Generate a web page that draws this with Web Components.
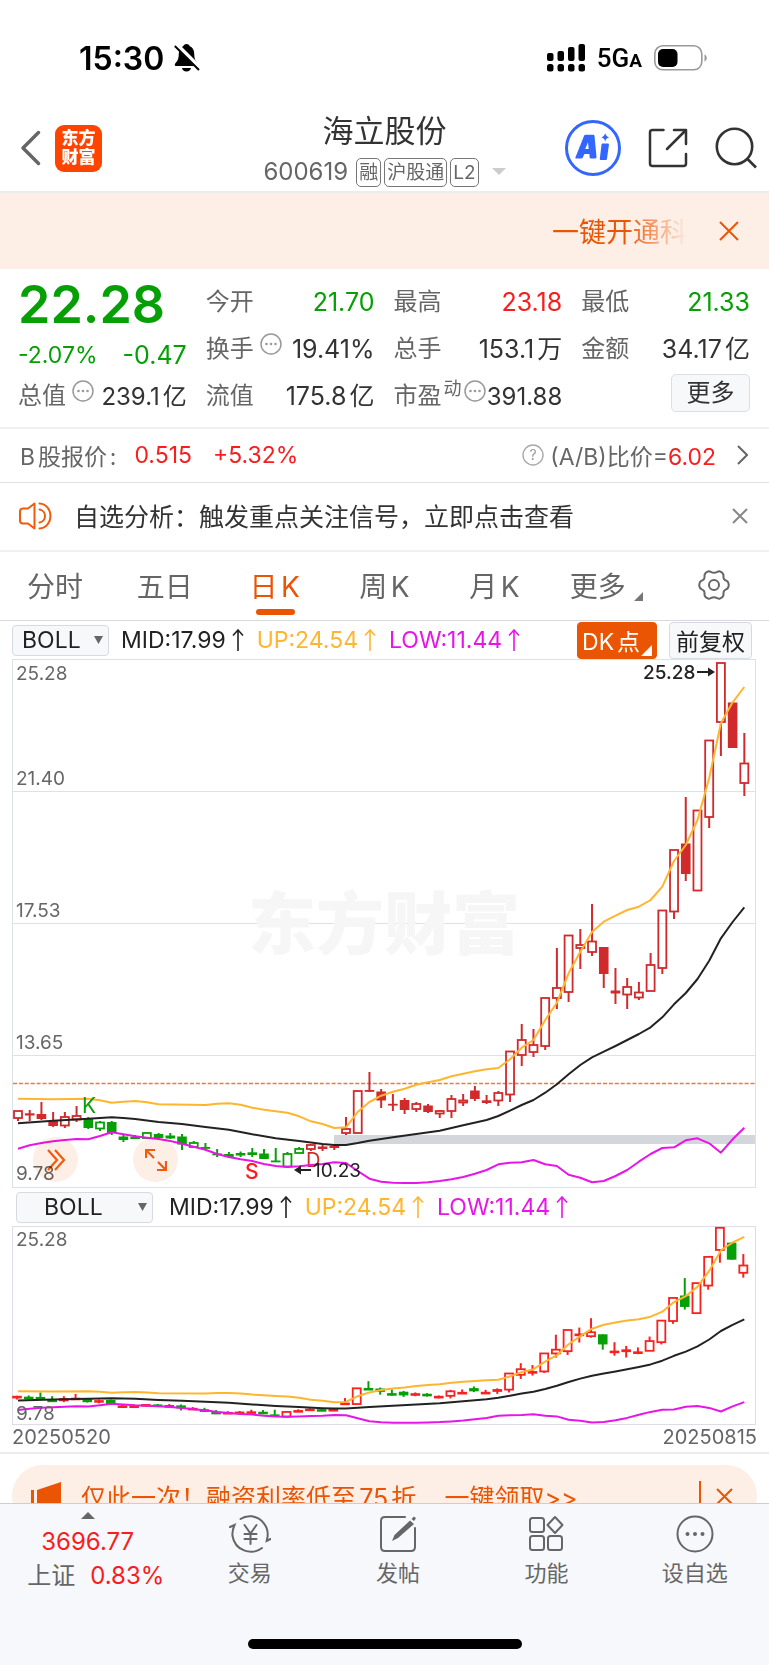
<!DOCTYPE html>
<html lang="zh-CN">
<head>
<meta charset="utf-8">
<meta name="viewport" content="width=device-width">
<title>海立股份 600619</title>
<style>
html{background:#fff}
body{margin:0;font-family:Inter,"Noto Sans CJK SC",sans-serif;color:#333;text-autospace:normal}
</style>
</head>
<body>
<stock-app></stock-app>
<script>
const RESET = `*{box-sizing:border-box}button,select{font:inherit;color:inherit;margin:0;padding:0;border:0;background:none;cursor:pointer;text-autospace:inherit}a{color:inherit;text-decoration:none}svg{display:block;flex:none}`;
const define = (name, css, html) => customElements.define(name, class extends HTMLElement {
  connectedCallback() {
    if (this.shadowRoot) return;
    const root = this.attachShadow({ mode: "open" });
    root.innerHTML = `<style>${RESET}${css}</style>${typeof html === "function" ? html(this) : html}`;
  }
});

define("status-bar", `
:host{display:flex;align-items:center;justify-content:space-between;height:100px;padding:16px 61px 0 79px;color:#000}
.l,.r{display:flex;align-items:center}
.l{font-size:32px;font-weight:600;gap:10px}
.r{gap:12px}
.net{font:500 26px Roboto,sans-serif}
.net small{font-size:19px;font-weight:700}`,
`<div class="l"><span>15:30</span><svg width="26" height="28" viewBox="0 0 26 28"><path d="M12.500 0c-1.800 0-3 1-3.300 2.300C6.500 3.300 4.800 6 4.800 9.500c0 4.500-.8 7-3 9.300-1.300 1.300-1.600 3.200.2 3.200h21c1.800 0 1.500-1.900.2-3.200-2.200-2.300-3-4.800-3-9.300 0-3.500-1.700-6.200-4.400-7.200C15.500 1 14.300 0 12.500 0ZM8 24h9c-.4 2-2 3.600-4.500 3.600S8.400 26 8 24Z"/><path d="M2 .5 26 24.500" stroke="#fff" stroke-width="5"/><path d="M.8 2 25 26" stroke="#000" stroke-width="2"/></svg></div>
<div class="r"><svg width="38" height="28" viewBox="0 0 38 28"><rect y="9" width="6.500" height="8" rx="2"/><rect x="10.500" y="7" width="6.500" height="10" rx="2"/><rect x="21" y="3" width="6.500" height="14" rx="2"/><rect x="31.500" y="0" width="6.500" height="17" rx="2"/><rect y="20" width="6.500" height="7.500" rx="2.500"/><rect x="10.500" y="20" width="6.500" height="7.500" rx="2.500"/><rect x="21" y="20" width="6.500" height="7.500" rx="2.500"/><rect x="31.500" y="20" width="6.500" height="7.500" rx="2.500"/></svg>
<span class="net">5G<small>A</small></span>
<svg width="54" height="26" viewBox="0 0 54 26"><rect x=".8" y=".8" width="47" height="24" rx="8" fill="none" stroke="#999" stroke-width="1.600"/><rect x="4" y="4" width="19.500" height="18" rx="5"/><path d="M50.500 9.500c1.500.6 2.300 2 2.300 3.500s-.8 2.900-2.300 3.500Z" fill="#999"/></svg></div>`);

define("app-header", `
:host{display:grid;grid-template-columns:1fr auto 1fr;align-items:center;height:93px;padding:2px 12px 0 12px;border-bottom:2px solid #ececec}
.l,.r{display:flex;align-items:center}
.l{gap:13px;padding-left:7px}.r{justify-content:flex-end;gap:27px;padding-top:3px}
.logo{width:47px;height:47px;border-radius:9px;background:#ff4400;color:#fff;font-size:17px;font-weight:900;line-height:19px;display:grid;place-content:center;margin-top:3px;padding-bottom:1px}
.back{margin-top:3px}
.mid{text-align:center;padding-top:9px}
h1{margin:0;font-size:31px;line-height:38px;font-weight:400;color:#333}
.sub{display:flex;align-items:center;gap:3px;color:#666;font-size:24px;line-height:36px;padding-top:4px}
.sub b{font-weight:400;margin-right:5px}
.sub i{font-style:normal;font-size:19px;line-height:27px;border:1px solid #777;border-radius:5px;padding:0 2px}
.sub svg{margin-left:10px}`,
`<div class="l"><button class="back" aria-label="返回"><svg width="23" height="36" viewBox="0 0 23 36" fill="none" stroke="#666" stroke-width="3.500" stroke-linecap="round" stroke-linejoin="round"><path d="M19.500 2.500 4 18l15.500 15.500"/></svg></button><a href="#" class="logo"><span>东方</span><span>财富</span></a></div>
<div class="mid"><h1>海立股份</h1><div class="sub"><b>600619</b><i>融</i><i>沪股通</i><i>L2</i><svg width="14" height="8"><path d="M0 0h14L7 7Z" fill="#ccc"/></svg></div></div>
<div class="r"><button aria-label="AI"><svg width="56" height="56" viewBox="0 0 56 56" fill="#36f"><circle cx="28" cy="28" r="26.500" fill="#fff" stroke="#36f" stroke-width="3"/><path fill-rule="evenodd" d="M20.500 14.800h7.500c.8 0 1.400.5 1.500 1.300l2 21c.1.800-.4 1.400-1.200 1.400h-4.500c-.7 0-1.100-.5-1.200-1.200l-.2-3.300h-5l-1.600 3.500c-.3.700-.8 1-1.500 1h-5c-.8 0-1.100-.6-.8-1.300l8.600-21.400c.3-.7.7-1 1.400-1Zm2.500 7.500-2.800 6.700h3.500Z"/><path d="M37.800 23.500h5c.8 0 1.200.5 1.100 1.300l-1.900 14c-.1.800-.6 1.300-1.400 1.300h-4.700c-.8 0-1.200-.5-1.100-1.300l1.700-14c.1-.8.6-1.300 1.300-1.300ZM40.200 13c.8 2.700 1.500 3.500 4 4.300-2.500.8-3.200 1.600-4 4.200-.8-2.600-1.500-3.400-4-4.200 2.500-.8 3.200-1.600 4-4.300Z"/></svg></button>
<button aria-label="分享"><svg width="40" height="40" viewBox="0 0 40 40" fill="none" stroke="#333" stroke-width="2.500" stroke-linecap="round" stroke-linejoin="round"><path d="M15.500 2H4.500C3 2 2 3 2 4.500v31C2 37 3 38 4.500 38h31c1.500 0 2.500-1 2.500-2.500V26M26 2h12v14M38 2 19 21"/></svg></button>
<button aria-label="搜索"><svg width="42" height="42" viewBox="0 0 42 42" fill="none" stroke="#333" stroke-width="2.600"><circle cx="19.500" cy="19.500" r="17.700"/><path d="m32 31.500 9 9"/></svg></button></div>`);

define("marquee-banner", `
:host{display:flex;align-items:center;justify-content:flex-end;gap:32px;height:76px;padding:0 30px;background:#fdeee6;color:#ea5504}
a{font-size:27px;line-height:36px;padding-top:3px;background:linear-gradient(90deg,#ea5504 55%,#ea550400 100%);background-clip:text;-webkit-background-clip:text;color:transparent}`,
`<a href="#">一键开通科</a><button aria-label="关闭"><svg width="20" height="20" viewBox="0 0 20 20" stroke="#ea5504" stroke-width="2"><path d="m1 1 18 18M19 1 1 19"/></svg></button>`);

const DOTS = `<svg width="22" height="22" viewBox="0 0 22 22" fill="#999"><circle cx="11" cy="11" r="10" fill="none" stroke="#999" stroke-width="1.500"/><circle cx="6.500" cy="11" r="1.300"/><circle cx="11" cy="11" r="1.300"/><circle cx="15.500" cy="11" r="1.300"/></svg>`;
define("quote-item", `
:host{display:flex;align-items:center;justify-content:space-between;font-size:24px;line-height:34px;white-space:nowrap}
.k{display:flex;align-items:center;color:#666}
.k svg{margin:0 0 10px 6px}
sup{font-size:18px;line-height:18px;vertical-align:0;margin:0 0 14px 2px}
sup+svg{margin-left:2px!important}
.v{color:var(--c,#333);font-size:25px}
:host([small]) .v{font-size:24px;padding-top:2px}`,
el => `<span class="k">${el.getAttribute("label")}${el.hasAttribute("sup") ? `<sup>${el.getAttribute("sup")}</sup>` : ""}${el.hasAttribute("info") ? DOTS : ""}</span><span class="v"><slot></slot></span>`);

define("quote-panel", `
:host{display:grid;grid-template-columns:repeat(4,minmax(0,1fr));grid-auto-rows:47px;column-gap:19px;align-items:center;padding:9px 19px 8px 18px;border-bottom:2px solid #f0f0f0}
.up{--c:#f91d1d}.down{--c:#06a006}
.price{font-size:52px;font-weight:600;line-height:47px;color:#06a006;padding-top:6px;white-space:nowrap}
.chg{display:flex;justify-content:space-between;align-items:center;color:#06a006;font-size:25px;padding-top:13px}
.chg small{font-size:23px}
button{justify-self:end;width:79px;height:38px;margin-bottom:5px;border:1px solid #dcdee5;border-radius:5px;background:#f7f8fa;font-size:24px;line-height:34px}`,
`<div class="price">22.28</div>
<quote-item label="今开" class="down">21.70</quote-item><quote-item label="最高" class="up">23.18</quote-item><quote-item label="最低" class="down">21.33</quote-item>
<div class="chg"><small>-2.07%</small><span>-0.47</span></div>
<quote-item label="换手" info>19.41%</quote-item><quote-item label="总手">153.1万</quote-item><quote-item label="金额">34.17亿</quote-item>
<quote-item label="总值" info small>239.1亿</quote-item><quote-item label="流值">175.8亿</quote-item><quote-item label="市盈" sup="动" info small>391.88</quote-item><button>更多</button>`);

define("b-share-row", `
:host{display:flex;align-items:center;height:54px;padding:0 21px 2px 20px;border-bottom:1px solid #dfe3e8;font-size:23px;color:#666}
.red{color:#f91d1d}.a{margin:0 21px 0 18px}
a{display:flex;align-items:center;margin-left:auto}
a svg:first-child{margin-right:6px}a svg:last-child{margin-left:21px}`,
`<span>B股报价:</span><span class="red a">0.515</span><span class="red">+5.32%</span>
<a href="#"><svg width="22" height="22" viewBox="0 0 22 22"><circle cx="11" cy="11" r="10" fill="none" stroke="#aaa" stroke-width="1.400"/><text x="11" y="16" font-size="14" text-anchor="middle" fill="#999">?</text></svg><span>(A/B)比价=<span class="red">6.02</span></span><svg width="11" height="20" viewBox="0 0 11 20" fill="none" stroke="#666" stroke-width="2"><path d="m1 1 9 9-9 9"/></svg></a>`);

define("notice-row", `
:host{display:flex;align-items:center;height:69px;padding:0 21px 2px 19px;border-bottom:2px solid #f0f0f0;font-size:25px;color:#333}
span{flex:1;margin-left:22px;padding-bottom:2px;white-space:nowrap}`,
`<svg width="33" height="28" viewBox="0 0 33 28" fill="none" stroke="#f25a0c" stroke-width="2" stroke-linejoin="round" stroke-linecap="round"><path d="M15.500 1.500v25L9 21.500H4c-2 0-3-1-3-3v-9c0-2 1-3 3-3h5ZM20.500 1.500C27.500 2 31.500 8 31.500 14s-4 12-11 12.500M20.500 7.500c3.500.5 5.500 3.500 5.500 6.500s-2 6-5.500 6.500"/></svg><span>自选分析：触发重点关注信号，立即点击查看</span><button aria-label="关闭"><svg width="16" height="16" viewBox="0 0 16 16" stroke="#888" stroke-width="2"><path d="m1 1 14 14M15 1 1 15"/></svg></button>`);

define("period-tabs", `
:host{display:grid;grid-template-columns:repeat(7,1fr);height:69px;border-bottom:1px solid #d8dae2;font-size:28px;color:#666}
button{display:flex;align-items:center;justify-content:center;position:relative;padding-bottom:2px;font-size:28px;white-space:nowrap}
.on{color:#ea5504}
.on::after{content:"";position:absolute;left:50%;bottom:5px;width:39px;height:6px;margin-left:-19px;border-radius:3px;background:#ea5504}
.more svg{margin:22px 0 0 8px}.more{padding-left:4px}`,
`<button>分时</button><button>五日</button><button class="on">日K</button><button>周K</button><button>月K</button><button class="more">更多<svg width="9" height="9"><path d="M9 0v9H0Z" fill="#777"/></svg></button>
<button aria-label="设置"><svg width="32" height="30" viewBox="0 0 32 30" fill="none" stroke="#666" stroke-width="2" stroke-linejoin="round"><path d="M10.500 1.200c1.800-.3 2.700 1.600 5.500 1.600s3.700-1.900 5.500-1.600c2.200.6 3.300 1.500 3.800 3.200.5 1.600-.4 2.800.8 4.700 1.100 1.700 2.900 1.500 3.900 3 .9 1.800.9 4 0 5.800-1 1.500-2.800 1.300-3.900 3-1.200 1.900-.3 3.100-.8 4.700-.5 1.700-1.600 2.600-3.800 3.200-1.800.3-2.700-1.600-5.500-1.600s-3.700 1.900-5.500 1.600c-2.200-.6-3.300-1.500-3.800-3.200-.5-1.600.4-2.800-.8-4.700-1.100-1.700-2.900-1.500-3.900-3-.9-1.800-.9-4 0-5.800 1-1.500 2.800-1.300 3.900-3 1.200-1.900.3-3.100.8-4.700.5-1.700 1.600-2.600 3.800-3.200Z"/><circle cx="16" cy="15" r="5"/></svg></button>`);

define("boll-legend", `
:host{display:flex;align-items:center;gap:13px;font-size:23px;color:#222;white-space:nowrap}
span{display:flex;align-items:center;gap:6px}
.u{color:#ffb52e}.w{color:#e815e8}`,
() => [["", "MID:17.99"], ["u", "UP:24.54"], ["w", "LOW:11.44"]].map(([c, t]) => `<span class="${c}">${t}<svg width="12" height="22" viewBox="0 0 12 22" fill="none" stroke="currentColor" stroke-width="1.600"><path d="M6 22V1M1 6.500 6 1l5 5.500"/></svg></span>`).join(""));

define("boll-select", `
:host{display:block;position:relative;width:97px;height:31px;font-size:23px;color:#222}
select{appearance:none;width:100%;height:100%;border:1px solid #d8dae2;border-radius:4px;background:#f7f8fa;padding:0 0 0 9px}
:host([wide]){width:137px}
:host([wide]) select{padding-left:27px}
svg{position:absolute;right:6px;top:11px;pointer-events:none}`,
`<select aria-label="指标"><option>BOLL</option></select><svg width="9" height="8"><path d="M0 0h9L4.500 8Z" fill="#666"/></svg>`);

define("tool-row", `
:host{display:flex;align-items:center;gap:12px;height:38px;padding:0 17px 0 12px}
:host([sub]){padding-left:16px;gap:16px}
slot{display:contents}`, `<slot></slot>`);

define("flag-button", `
:host{display:block;margin-left:auto}
button{position:relative;height:37px;padding:0 6px;border:1px solid #d8dae2;border-radius:4px;background:#f7f8fa;color:#222;font-size:23px;white-space:nowrap}
svg{position:absolute;right:4px;bottom:2px}
:host([primary]) button{background:#ea5504;color:#fff;border-color:#ea5504;width:80px;padding:0 14px 0 2px}
:host(:not([primary])){margin-left:0}`,
el => `<button><slot></slot>${el.hasAttribute("primary") ? `<svg width="11" height="11"><path d="M11 0v11H0Z" fill="#fff"/></svg>` : ""}</button>`);

/* Each bar: [style, bodyTop, bodyBottom, wickTop, wickBottom]; h = hollow, f = filled. */
const BARS = [
["h",1111,1118,1111,1121],["f",1113.300,1115.500,1110,1121],["f",1114,1119,1102,1120],["f",1121,1126,1112,1127],["h",1117,1125.500,1112,1128],["h",1116,1119.500,1106,1122],
["f",1118,1128,1117,1129],["h",1122.500,1128.500,1121,1131],["f",1122,1133,1121,1135],["f",1136.500,1140,1135,1142],["f",1136.700,1139,1135,1139],["h",1133,1138,1133,1139],["f",1134,1138,1133,1139],["f",1135.500,1138.500,1133,1139],["f",1136.500,1144.500,1134,1150],["h",1143,1147,1141,1147],["f",1147,1148.300,1143,1150],["f",1153.500,1155,1149,1157],["f",1154,1157,1152,1158],["f",1153,1155.500,1151.500,1157],["f",1152.300,1155,1148,1157],["f",1153.500,1159,1149,1159],["f",1160.500,1162,1148,1162],["h",1154,1166.500,1152,1168],["h",1149,1153,1147,1153],
["h",1145,1149,1144,1151],["f",1146.500,1149,1145,1151],["f",1146,1148,1145,1150],["h",1129,1133,1117,1135],["h",1091,1133,1091,1133],["f",1090,1091.500,1072,1092],["f",1091.500,1100.500,1089,1108],["f",1103.800,1105,1094,1111],["f",1100,1110,1098,1114],["h",1104,1109,1102,1112],["f",1105.500,1112,1104,1113],["h",1111,1113.500,1110,1118],["h",1099,1111,1095,1118],["h",1100.500,1102.500,1094,1106],["f",1090.500,1099,1086,1101],["f",1100.300,1103,1095,1104],["h",1093,1100.500,1091,1106],
["h",1051.500,1094.500,1051,1102],["h",1040,1055,1024,1066],["h",1045,1052,1029,1057],["h",998,1046,998,1050],["h",988,998,948,1009],["h",935.500,992,935,1002],["h",945,948,929,969],["h",941.500,952,904,956],["f",947,974,947,988],["f",990.500,993.500,968,1004],["h",987,994.500,978,1009],["h",992.500,997.500,982,1000],["h",965,991,953,991],["h",910.500,968,910,974],["h",850,911.500,850,919],["f",843.500,874,797,881],["h",810.500,890.500,810,890],["h",740.500,817,740,828],["h",663,722,663,756],["f",702.500,748,702,748],["h",763.500,783,733,796]];
const DAILY = "rrrrrrggggggggggggggggggg" + "r".repeat(38);
const TREND = "rgggrrgrgrrrgrgrggrrrggrrrgrrrggggrgrrrgrr" + "rrrrrrrrgrrrrrrgrrrgr";
/* Band curves as [bar index, y] pairs. */
const UP = [[0,1098.700],[3,1099.300],[6,1098.700],[7,1100.300],[8,1102.700],[9,1101.700],[10,1101],[11,1102.300],[12,1104.300],[16,1105],[17,1103.700],[18,1103.300],[19,1104.700],[20,1107.700],[21,1109.700],[22,1111.300],[23,1112.700],[24,1116.300],[25,1121.300],[26,1124],[27,1128],[28,1127.300],[29,1112],[30,1102],[31,1095.700],[32,1091.700],[33,1088.700],[34,1084.700],[35,1082.300],[36,1080],[37,1076.300],[38,1073.700],[39,1071.300],[40,1069.300],[41,1068],[42,1059.300],[43,1047.700],[44,1040],[45,1020],[46,1002.700],[47,973.300],[48,951.700],[49,932],[50,921.700],[51,915.700],[52,910],[53,906.700],[54,900],[55,886.700],[56,861],[57,845],[58,820],[59,778],[60,723.300],[61,702.300],[62,687]];
const MID = [[0,1123.300],[3,1120.700],[6,1118.700],[8,1117.300],[9,1118],[10,1119],[12,1122],[14,1124],[16,1127],[18,1129.700],[20,1134.300],[22,1138.300],[24,1141],[26,1144],[27,1145],[28,1145],[29,1143],[30,1140.700],[32,1137.300],[34,1134],[36,1130.700],[38,1125.300],[40,1120],[41,1116],[42,1110.700],[43,1105],[44,1100],[45,1092.700],[46,1084.300],[47,1074.300],[48,1065],[49,1057.300],[50,1051.700],[51,1046],[52,1040],[53,1034],[54,1027.300],[55,1017.300],[56,1004.300],[57,993],[58,979],[59,960.700],[60,938.300],[61,922],[62,907.300]];
const LOW = [[0,1148.700],[1,1145.300],[2,1143],[3,1141.300],[4,1140],[5,1139],[6,1139.300],[7,1136],[8,1132.300],[9,1134.300],[10,1136.300],[11,1137.700],[12,1139],[13,1141],[14,1143.700],[15,1146.700],[16,1149.700],[17,1154],[18,1157],[19,1159.300],[20,1161],[21,1164],[22,1166],[23,1167],[24,1166.300],[25,1165],[26,1164],[27,1162.300],[28,1163],[29,1171],[30,1178.700],[31,1181.700],[32,1182.700],[33,1183],[34,1183],[35,1182.300],[36,1181],[37,1179.300],[38,1177],[39,1173.700],[40,1170],[41,1164.300],[42,1162.700],[43,1162.300],[44,1160],[45,1164.300],[46,1166],[47,1174.700],[48,1177.700],[49,1182.300],[50,1181],[51,1176],[52,1170],[53,1161.700],[54,1154],[55,1148],[56,1147.300],[57,1140.300],[58,1138.300],[59,1143.300],[60,1152.700],[61,1139.300],[62,1127.700]];
const px = i => 18 + 11.715 * i;
const curve = (pts, y, color) => `<polyline fill="none" stroke="${color}" stroke-width="2" stroke-linejoin="round" points="${pts.map(([i, v]) => px(i).toFixed(1) + "," + y(v).toFixed(1)).join(" ")}"/>`;
const bars = (tones, y, red, green, dx, minHollow) => BARS.map(([s, a, b, t, w], i) => {
  const c = tones[i] === "r" ? red : green, x = px(i) + dx;
  const [A, B, T, W] = [a, b, t, w].map(y);
  const hollow = (minHollow ? tones[i] === "r" : s === "h") && B - A > minHollow;
  const wick = (p, q) => q > p ? `<path d="M${x} ${p}V${q}" stroke="${c}" stroke-width="2"/>` : "";
  if (hollow) return wick(T, A) + wick(B, W) + `<rect x="${x - 4}" y="${A}" width="8" height="${B - A}" fill="none" stroke="${c}" stroke-width="1.800"/>`;
  const h = Math.max(B - A, minHollow ? 2.600 : 1.800);
  return wick(T, W) + `<rect x="${x - 4.800}" y="${A}" width="9.600" height="${h}" fill="${c}"/>`;
}).join("");

define("kline-chart", `
:host{display:block;position:relative;margin:0 12px}
svg.c{width:100%;height:auto}
text{font-size:19px;fill:#666}
.fab{position:absolute;bottom:6px;width:45px;height:45px;border-radius:50%;background:#fdeee6;mix-blend-mode:multiply;display:grid;place-items:center}
.a{left:21px}.b{left:121px}`,
() => {
  const y = v => v;
  return `<svg class="c" viewBox="12 659 745 529">
<g fill="none" stroke="#dfe1e8"><path d="M12.500 791.500H755.500M12.500 923.500H755.500M12.500 1055.500H755.500"/><rect x="12.500" y="659.500" width="743" height="528"/></g>
<text x="384" y="949" text-anchor="middle" style="font-size:68px;font-weight:900;fill:#f6f6f6">东方财富</text>
<rect x="334" y="1135" width="421" height="9" fill="#d3d6db"/>
<path d="M13 1083.500H755" stroke="#f2792f" stroke-width="1.600" stroke-dasharray="4 1.900"/>
${bars(DAILY, y, "#d02a2c", "#06a006", 0, 0)}
${curve(MID, y, "#222")}${curve(UP, y, "#ffb52e")}
<text x="82" y="1113" style="font-size:21px;fill:#06a006">K</text><text x="245" y="1179" style="font-size:21px;font-weight:500;fill:#f91d1d">S</text><text x="306" y="1167" style="font-size:20px;fill:#d02a2c">D</text>
${curve(LOW, y, "#e815e8")}
<text x="16" y="680">25.28</text><text x="16" y="785">21.40</text><text x="16" y="917">17.53</text><text x="16" y="1049">13.65</text><text x="16" y="1180">9.78</text>
<text x="643" y="679" style="fill:#222;font-weight:500">25.28</text><path d="M697 672h13" stroke="#222" stroke-width="2"/><path d="m708 667.500 7 4.500-7 4.500Z" fill="#222"/>
<text x="313" y="1177" style="fill:#222">10.23</text><path d="M311 1170h-13" stroke="#222" stroke-width="2"/><path d="m301 1165.500-7 4.500 7 4.500Z" fill="#222"/>
</svg>
<button class="fab a" aria-label="展开"><svg width="20" height="22" viewBox="0 0 20 22" fill="none" stroke="#f25a0c" stroke-width="2.200"><path d="m2 1 9 10-9 10M9 1l9 10-9 10"/></svg></button>
<button class="fab b" aria-label="全屏"><svg width="22" height="22" viewBox="0 0 22 22" fill="none" stroke="#f25a0c" stroke-width="2.200"><path d="M1 9V1h9M1 1l8 8M21 12v9h-9M21 21l-8-8"/></svg></button>`;
});

define("boll-chart", `
:host{display:block;margin:0 12px}
svg{width:100%;height:auto}text{font-size:19px;fill:#666}
.d{display:flex;justify-content:space-between;font-size:20px;line-height:25px;height:27px;color:#666}`,
() => {
  const y = v => 1226.500 + (v - 659.500) * 0.375;
  return `<svg viewBox="12 1226 745 199"><rect x="12.500" y="1226.500" width="743" height="198" fill="none" stroke="#dcdde6"/>
${bars(TREND, y, "#fa2020", "#06a006", -1, 3.500)}
${curve(MID, y, "#222")}${curve(UP, y, "#ffb52e")}${curve(LOW, y, "#e815e8")}
<text x="16" y="1246">25.28</text><text x="16" y="1420">9.78</text></svg>
<div class="d"><span>20250520</span><span>20250815</span></div>`;
});

define("promo-bar", `
:host{display:block;border-top:2px solid #ececec;padding:11px 12px 0}
div{display:flex;align-items:center;height:62px;padding:0 24px 0 18px;border-radius:31px;background:#fdeee6;color:#ea5504;font-size:25px;white-space:nowrap}
a{flex:1;margin-left:20px;white-space:pre}
i{width:2px;height:30px;background:#ea5504;margin-right:15px}`,
`<div><svg width="31" height="28" viewBox="0 0 31 28" fill="#ea5504"><path d="M31 0v28L7 21V8ZM1 8h3v13H1Z"/></svg><a href="#">仅此一次！融资利率低至75折    一键领取&gt;&gt;</a><i></i><button aria-label="关闭"><svg width="17" height="17" viewBox="0 0 17 17" stroke="#ea5504" stroke-width="2"><path d="m1 1 15 15M16 1 1 16"/></svg></button></div>`);

define("nav-item", `
:host{display:block}
a{display:flex;flex-direction:column;align-items:center;color:#666;font-size:22px;line-height:30px;gap:5px}
slot{display:contents}`,
el => `<a href="#"><slot></slot><span>${el.getAttribute("label")}</span></a>`);

define("bottom-nav", `
:host{position:fixed;left:0;right:0;bottom:0;height:162px;border-top:1px solid #ccced4;background:#f7f8fb}
nav{display:grid;grid-template-columns:175fr repeat(4,148fr);padding-top:8px}
.ix{display:flex;flex-direction:column;align-items:center;color:#f91d1d;font-size:24px;line-height:34px;padding-left:16px}
.ix span{white-space:nowrap}
.ix svg{margin:0 16px 6px 0}
.ix span:nth-child(2){margin-right:16px}
.ix b{font-weight:400;color:#666;margin-right:12px}
nav-item{padding-top:3px}
hr{position:absolute;left:50%;bottom:16px;width:274px;height:10px;margin:0 0 0 -137px;border:0;border-radius:5px;background:#000}`,
`<nav><a href="#" class="ix"><svg width="14" height="7"><path d="M7 0l7 7H0Z" fill="#666"/></svg><span>3696.77</span><span><b>上证</b>0.83%</span></a>
<nav-item label="交易"><svg width="42" height="38" viewBox="0 0 42 38" fill="none" stroke="#666" stroke-width="2" stroke-linecap="round"><path d="M11.500 4C15 1.500 19 .8 23 1.300 33 3 40 12 38.500 22l-.8 4 3.800-2M33 33C22 41 6 35.500 3.500 21 3 17 4 13.500 5.500 10L1 12M15.500 10l6 8.500 6-8.500M21.500 18.500V29M15.500 19h12M15.500 24h12"/></svg></nav-item>
<nav-item label="发帖"><svg width="38" height="38" viewBox="0 0 38 38" fill="none" stroke="#666" stroke-width="2" stroke-linecap="round"><path d="M26 2H6C3.500 2 2 3.500 2 6v26c0 2.500 1.500 4 4 4h26c2.500 0 4-1.500 4-4V13"/><path d="M31 5.500 35 9 19 23l-6 3 2.500-6ZM32.500 4l2-2c.8-.8 3 1 2 2l-1.500 2Z" fill="#666" stroke="none"/></svg></nav-item>
<nav-item label="功能"><svg width="36" height="38" viewBox="0 0 36 38" fill="none" stroke="#666" stroke-width="2" stroke-linejoin="round"><rect x="2" y="3" width="14" height="14" rx="2.500"/><rect x="2" y="21" width="14" height="14" rx="2.500"/><rect x="20" y="21" width="14" height="14" rx="2.500"/><path d="m27 2 7.500 8-7.500 8-7.500-8Z"/></svg></nav-item>
<nav-item label="设自选"><svg width="38" height="38" viewBox="0 0 38 38" fill="#666"><circle cx="19" cy="19" r="17.500" fill="none" stroke="#666" stroke-width="2"/><circle cx="11.500" cy="19" r="2"/><circle cx="19" cy="19" r="2"/><circle cx="26.500" cy="19" r="2"/></svg></nav-item></nav><hr>`);

define("stock-app", `:host{display:block;padding-bottom:40px}`,
`<status-bar></status-bar><app-header></app-header><marquee-banner></marquee-banner><quote-panel></quote-panel><b-share-row></b-share-row><notice-row></notice-row><period-tabs></period-tabs>
<tool-row><boll-select></boll-select><boll-legend></boll-legend><flag-button primary>DK点</flag-button><flag-button>前复权</flag-button></tool-row>
<kline-chart></kline-chart>
<tool-row sub><boll-select wide></boll-select><boll-legend></boll-legend></tool-row>
<boll-chart></boll-chart><promo-bar></promo-bar><bottom-nav></bottom-nav>`);
</script>
</body>
</html>
